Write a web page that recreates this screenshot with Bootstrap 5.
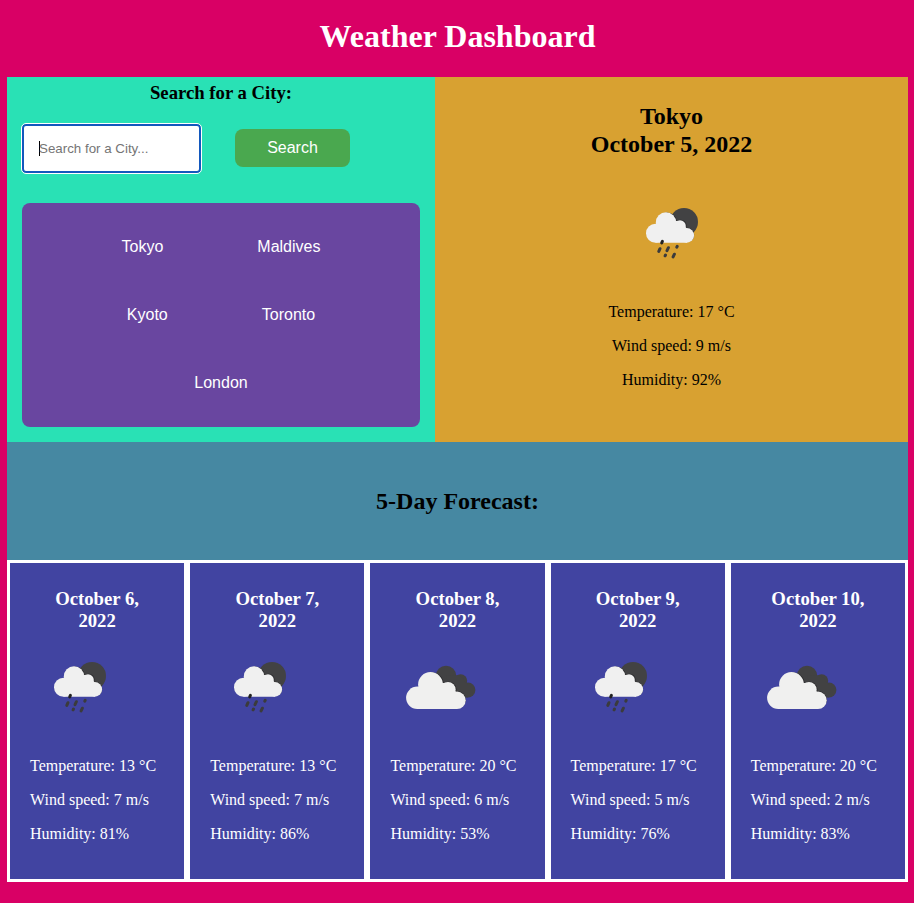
<!DOCTYPE html>
<html lang="en">
<head>
<meta charset="utf-8">
<meta name="viewport" content="width=device-width, initial-scale=1">
<title>Weather Dashboard</title>
<link href="https://cdn.jsdelivr.net/npm/bootstrap@5.3.0/dist/css/bootstrap.min.css" rel="stylesheet">
<style>
body{background:#d90065;color:#000;font-family:"Liberation Serif",serif;font-size:16px;line-height:18px;padding:0 6px 0 7px}
h1,h2,h3{font-weight:700;margin:0}
h1{font-size:32px;line-height:37px;height:77px;padding-top:18px}
h2{font-size:24px;line-height:28px}
h3{font-size:18.72px;line-height:22px}
.top-area{height:365px}
.search-side{width:428px;background:#29e1b5;padding:5px 15px 15px}
.search-row{margin-top:20px;height:49px}
.city-input{width:179px;height:49px;border:2px solid #1358bd;outline:1px solid #fff;border-radius:4px;background:#fff;font:13.33px "Liberation Sans",sans-serif;color:#757575;padding-left:15px}
.caret{width:1px;height:15px;background:#000;margin-right:-1px}
.search-btn,.city-btn{font:16px/18px "Liberation Sans",sans-serif;color:#fff;border:0;padding:0}
.search-btn{width:115px;height:38px;border-radius:8px;background:#4aa84f;margin:0 0 2px 34px}
.history{height:224px;margin-top:30px;padding:10px;background:#6946a0;border-radius:8px}
.city-line{height:68px;gap:94px}
.city-btn{background:none}
.today{background:#d8a131;padding-top:25px}
.today svg{margin:24px 0 21px}
p{margin:0 0 16px}
.forecast-title{height:118px;background:#4688a2;padding-bottom:1px}
.day{flex:1 1 0;min-width:0;height:322px;border:3px solid #fff;background:#4144a1;color:#fff;padding:25px 20px 0}
.day svg{margin:4px 0 21px}
.day p{white-space:nowrap}
svg{display:block}
</style>
</head>
<body>
<svg class="d-none">
  <symbol id="rain" viewBox="0 0 100 100">
    <circle cx="62" cy="40" r="14" fill="#424243"/>
    <g fill="#2a2a2c"><circle cx="45" cy="40.4" r="10"/><circle cx="58.8" cy="43.6" r="5.8"/><circle cx="65" cy="52.9" r="7.2"/></g>
    <g fill="#f0f0f0"><circle cx="44" cy="40.4" r="10.2"/><circle cx="33.5" cy="51.2" r="9.5"/><circle cx="58" cy="44" r="5.8"/><circle cx="64.8" cy="53.4" r="7.3"/><path d="M33.5 45L42 39h17l6 8v13.7H33.5z"/></g>
    <g stroke="#3b3b3c" stroke-width="3" stroke-linecap="round"><path d="M40.4 59.3l-.7 1.6" stroke="#222"/><path d="M38 66.7l-1.2 2.7M46.4 65.7L45 68.6M55.2 64.3l-.4.9M43.5 73l-.4.8M52.4 72.2l-1.3 2.7"/></g>
  </symbol>
  <symbol id="clouds" viewBox="0 0 100 100">
    <g fill="#424243"><circle cx="56" cy="40" r="10.3"/><circle cx="70.7" cy="44.8" r="6.5"/><circle cx="78" cy="54" r="7.4"/><path d="M56 40l14-1 8 10v12.4H65z"/></g>
    <g fill="#2a2a2c"><circle cx="41.7" cy="48.2" r="12"/><circle cx="59" cy="53.4" r="7.6"/><circle cx="67.4" cy="63.7" r="8.5"/></g>
    <g fill="#f0f0ef"><circle cx="40.5" cy="48.5" r="12.4"/><circle cx="27.3" cy="61.8" r="11.2"/><circle cx="58" cy="53.8" r="7.7"/><circle cx="67" cy="64.3" r="8.7"/><path d="M27 55l9-8h22l9 10v16H27z"/></g>
  </symbol>
</svg>
<header><h1 class="text-center text-white">Weather Dashboard</h1></header>
<main>
  <section class="top-area d-flex">
    <div class="search-side">
      <h3 class="text-center">Search for a City:</h3>
      <div class="search-row d-flex align-items-center">
        <div class="city-input d-flex align-items-center"><span class="caret"></span><span>Search for a City...</span></div>
        <button class="search-btn" type="button">Search</button>
      </div>
      <div class="history">
        <div class="city-line d-flex justify-content-center align-items-center"><button class="city-btn">Tokyo</button><button class="city-btn">Maldives</button></div>
        <div class="city-line d-flex justify-content-center align-items-center"><button class="city-btn">Kyoto</button><button class="city-btn">Toronto</button></div>
        <div class="city-line d-flex justify-content-center align-items-center"><button class="city-btn">London</button></div>
      </div>
    </div>
    <div class="today flex-grow-1 text-center">
      <h2>Tokyo<br>October 5, 2022</h2>
      <svg class="mx-auto" width="100" height="100"><use href="#rain"/></svg>
      <p>Temperature: 17 °C</p><p>Wind speed: 9 m/s</p><p>Humidity: 92%</p>
    </div>
  </section>
  <section class="forecast-title d-flex justify-content-center align-items-center"><h2>5-Day Forecast:</h2></section>
  <section class="d-flex">
    <article class="day"><h3 class="text-center">October 6,<br>2022</h3><svg width="100" height="100"><use href="#rain"/></svg><p>Temperature: 13 °C</p><p>Wind speed: 7 m/s</p><p>Humidity: 81%</p></article>
    <article class="day"><h3 class="text-center">October 7,<br>2022</h3><svg width="100" height="100"><use href="#rain"/></svg><p>Temperature: 13 °C</p><p>Wind speed: 7 m/s</p><p>Humidity: 86%</p></article>
    <article class="day"><h3 class="text-center">October 8,<br>2022</h3><svg width="100" height="100"><use href="#clouds"/></svg><p>Temperature: 20 °C</p><p>Wind speed: 6 m/s</p><p>Humidity: 53%</p></article>
    <article class="day"><h3 class="text-center">October 9,<br>2022</h3><svg width="100" height="100"><use href="#rain"/></svg><p>Temperature: 17 °C</p><p>Wind speed: 5 m/s</p><p>Humidity: 76%</p></article>
    <article class="day"><h3 class="text-center">October 10,<br>2022</h3><svg width="100" height="100"><use href="#clouds"/></svg><p>Temperature: 20 °C</p><p>Wind speed: 2 m/s</p><p>Humidity: 83%</p></article>
  </section>
</main>
<script src="https://cdn.jsdelivr.net/npm/bootstrap@5.3.0/dist/js/bootstrap.bundle.min.js"></script>
</body>
</html>
